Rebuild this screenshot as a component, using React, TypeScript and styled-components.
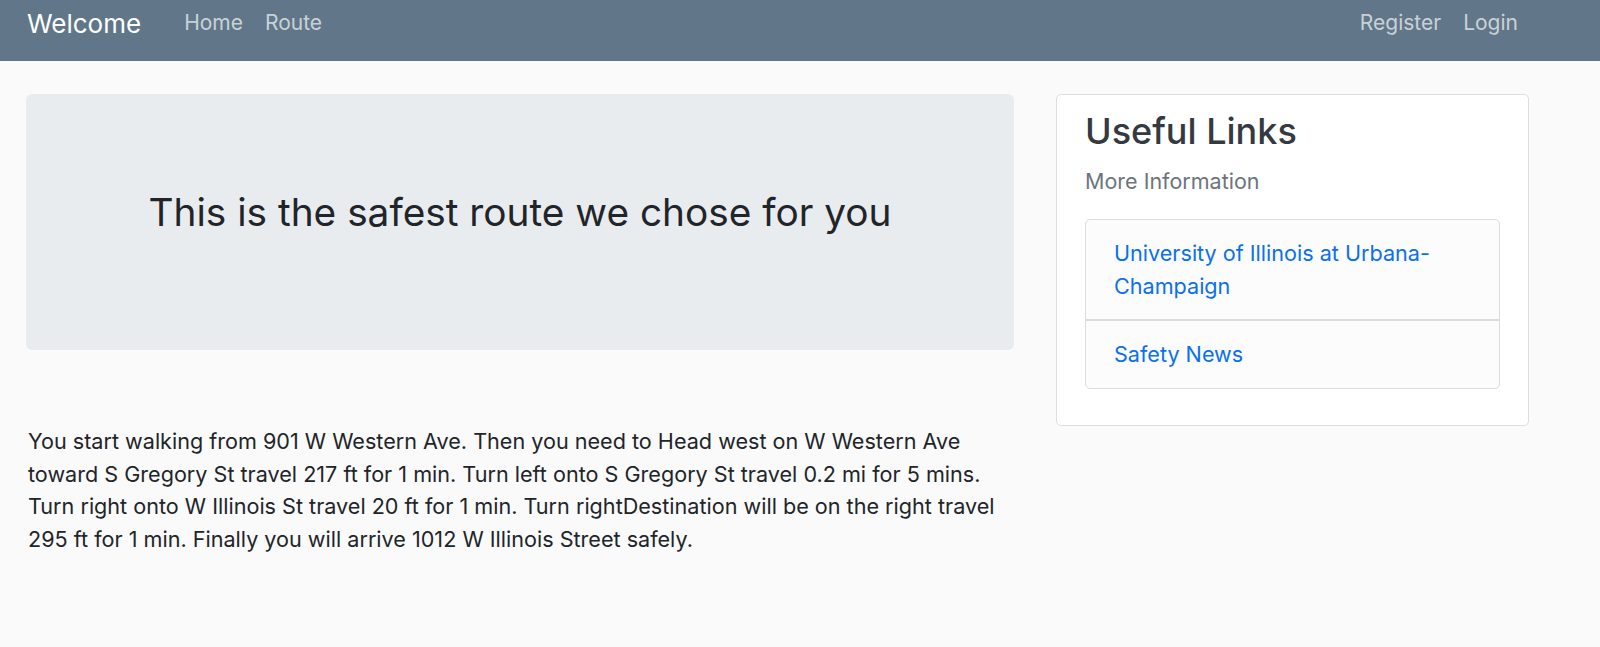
import React from "react";
import styled, { createGlobalStyle } from "styled-components";

const Global = createGlobalStyle`
  html, body { margin: 0; padding: 0; background: #fafafa; }
  body {
    font-family: Inter, "Noto Sans", "Liberation Sans", sans-serif;
    color: #212529;
    -webkit-font-smoothing: antialiased;
  }
  * { box-sizing: border-box; }
`;

const Navbar = styled.nav`
  height: 61px;
  background: #617789;
  display: flex;
  align-items: flex-start;
  padding: 0 82px 0 27px;
`;

const Brand = styled.a`
  font-size: 26px;
  color: #ffffff;
  margin-right: 43px;
  text-decoration: none;
  line-height: 1;
  padding-top: 11px;
`;

const NavGroup = styled.div<{ $push?: boolean }>`
  display: flex;
  gap: 22px;
  padding-top: 12px;
  margin-left: ${(p) => (p.$push ? "auto" : "0")};
`;

const NavLink = styled.a`
  font-size: 21px;
  color: rgba(255, 255, 255, 0.68);
  text-decoration: none;
  line-height: 1;
`;

const Main = styled.main`
  display: flex;
  gap: 42px;
  padding: 33px 71px 40px 26px;
  align-items: flex-start;
`;

const Content = styled.section`
  width: 988px;
  flex: none;
`;

const Jumbotron = styled.div`
  height: 256px;
  background: #e9ecef;
  border-radius: 6px;
  display: flex;
  align-items: center;
  justify-content: center;
  padding-bottom: 22px;
`;

const Headline = styled.h1`
  margin: 0;
  font-size: 38.8px;
  font-weight: 400;
  color: #212529;
`;

const Directions = styled.p`
  margin: 75px 0 0 2px;
  font-size: 21.6px;
  line-height: 32.5px;
  color: #212529;
`;

const Card = styled.aside`
  width: 473px;
  flex: none;
  background: #ffffff;
  border: 1.5px solid #dedede;
  border-radius: 5px;
  padding: 14px 28px 36px;
`;

const CardTitle = styled.h3`
  margin: 0;
  font-size: 36px;
  font-weight: 500;
  line-height: 44px;
  color: #343a40;
`;

const CardSubtitle = styled.h6`
  margin: 12px 0 0;
  font-size: 21.5px;
  font-weight: 400;
  line-height: 32.4px;
  color: #6c757d;
`;

const ListGroup = styled.ul`
  list-style: none;
  margin: 22px 0 0;
  padding: 0;
  border: 1.5px solid #dcdcdc;
  border-radius: 5px;
  background: #fcfcfc;
`;

const ListItem = styled.li`
  padding: 17px 28px;
  font-size: 21.6px;
  line-height: 32.4px;
  & + & {
    border-top: 2px solid #dcdcdc;
  }
`;

const LinkText = styled.a`
  color: #0a6ff0;
  text-decoration: none;
`;

export default function App() {
  return (
    <>
      <Global />
      <Navbar>
        <Brand href="#">Welcome</Brand>
        <NavGroup>
          <NavLink href="#">Home</NavLink>
          <NavLink href="#">Route</NavLink>
        </NavGroup>
        <NavGroup $push>
          <NavLink href="#">Register</NavLink>
          <NavLink href="#">Login</NavLink>
        </NavGroup>
      </Navbar>
      <Main>
        <Content>
          <Jumbotron>
            <Headline>This is the safest route we chose for you</Headline>
          </Jumbotron>
          <Directions>
            You start walking from 901 W Western Ave. Then you need to Head west on W Western Ave
            toward S Gregory St travel 217 ft for 1 min. Turn left onto S Gregory St travel 0.2 mi for 5 mins.
            Turn right onto W Illinois St travel 20 ft for 1 min. Turn rightDestination will be on the right travel
            295 ft for 1 min. Finally you will arrive 1012 W Illinois Street safely.
          </Directions>
        </Content>
        <Card>
          <CardTitle>Useful Links</CardTitle>
          <CardSubtitle>More Information</CardSubtitle>
          <ListGroup>
            <ListItem>
              <LinkText href="#">University of Illinois at Urbana-Champaign</LinkText>
            </ListItem>
            <ListItem>
              <LinkText href="#">Safety News</LinkText>
            </ListItem>
          </ListGroup>
        </Card>
      </Main>
    </>
  );
}
